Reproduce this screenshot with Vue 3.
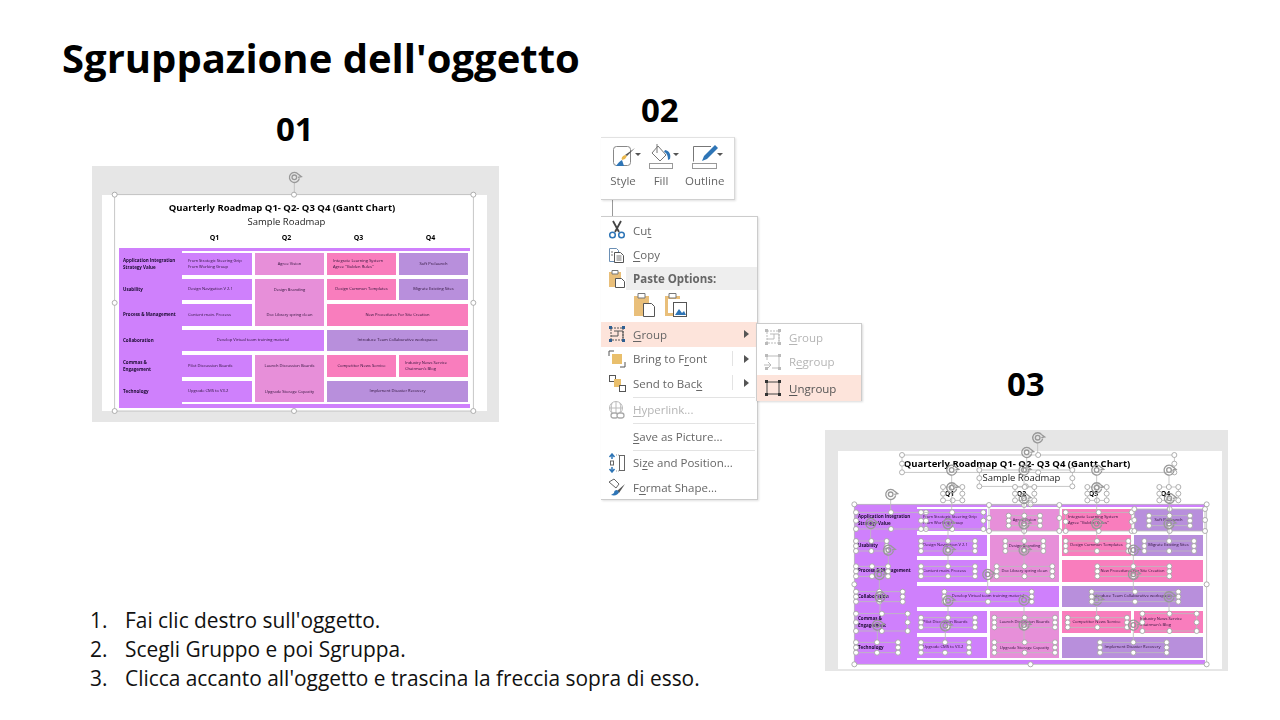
<template>
  <div class="slide">
    <h1 class="title">Sgruppazione dell'oggetto</h1>

    <div class="step step-1">01</div>
    <div class="step step-2">02</div>
    <div class="step step-3">03</div>

    <!-- both screenshots share the same roadmap, only the selection differs -->
    <div v-for="shot in shots" :key="shot.id" class="shot" :class="shot.id">
      <div class="paper">
        <div class="chart-title">Quarterly Roadmap Q1- Q2- Q3 Q4 (Gantt Chart)</div>
        <div class="chart-sub">Sample Roadmap</div>
        <div class="quarters">
          <span v-for="q in quarters" :key="q">{{ q }}</span>
        </div>
        <div class="gantt">
          <div v-for="row in labels" :key="row.text" class="label" :style="{ gridRow: row.row }">
            <span v-for="line in row.text.split('|')" :key="line">{{ line }}</span>
          </div>
          <div v-for="cell in cells" :key="cell.text" class="cell" :class="cell.tone"
            :style="{ gridRow: cell.row, gridColumn: cell.col }">
            <div :class="{ left: cell.left }">
              <span v-for="line in cell.text.split('|')" :key="line">{{ line }}</span>
            </div>
          </div>
        </div>
      </div>
      <svg class="handles" :viewBox="shot.view">
        <g v-for="(b, i) in shot.boxes" :key="i">
          <rect :x="b[0]" :y="b[2]" :width="b[1] - b[0]" :height="b[3] - b[2]" class="sel" />
          <template v-if="b[4]">
            <line :x1="b[4]" :y1="b[5] + 15" :x2="b[4]" :y2="b[2]" class="sel" />
            <path :d="rotator(b[4], b[5])" class="rot" />
            <circle :cx="b[4]" :cy="b[5]" r="7" class="rot" />
          </template>
          <circle v-for="(p, n) in points(b)" :key="n" :cx="p[0]" :cy="p[1]" r="7.5" class="dot" />
        </g>
      </svg>
    </div>

    <div class="connector"></div>

    <div class="ribbon">
      <div v-for="tool in tools" :key="tool.label" class="tool">
        <div class="tool-icon">
          <svg width="28" height="26" viewBox="0 0 28 26" v-html="tool.icon"></svg>
          <i class="caret"></i>
        </div>
        <span>{{ tool.label }}</span>
      </div>
    </div>

    <div class="menu">
      <template v-for="item in menu" :key="item.key">
        <div v-if="item.line" class="sep"></div>
        <div v-else-if="item.paste" class="paste-row">
          <svg width="24" height="24" viewBox="0 0 24 24" v-html="icons.paste"></svg>
          <svg width="24" height="24" viewBox="0 0 24 24" v-html="icons.pastePic"></svg>
        </div>
        <div v-else class="row" :class="{ active: item.active, dim: item.dim, head: item.head }">
          <svg v-if="item.icon" class="row-icon" width="20" height="20" viewBox="0 0 20 20" v-html="icons[item.icon]"></svg>
          <span v-else class="row-icon"></span>
          <span class="row-text">{{ item.a }}<u>{{ item.u }}</u>{{ item.b }}</span>
          <i v-if="item.split" class="split"></i>
          <i v-if="item.more" class="more"></i>
        </div>
      </template>

      <div class="submenu">
        <div v-for="item in submenu" :key="item.a + item.u" class="row" :class="{ active: item.active, dim: item.dim }">
          <svg class="row-icon" width="20" height="20" viewBox="0 0 20 20" v-html="icons[item.icon]"></svg>
          <span class="row-text">{{ item.a }}<u>{{ item.u }}</u>{{ item.b }}</span>
        </div>
      </div>
    </div>

    <ol class="steps">
      <li v-for="(text, i) in instructions" :key="i"><span>{{ i + 1 }}.</span>{{ text }}</li>
    </ol>
  </div>
</template>

<script setup>
const quarters = ['Q1', 'Q2', 'Q3', 'Q4']

const labels = [
  { row: '1', text: 'Application Integration|Strategy Value' },
  { row: '2', text: 'Usability' },
  { row: '3', text: 'Process & Management' },
  { row: '4', text: 'Collaboration' },
  { row: '5', text: 'Commas &|Engagement' },
  { row: '6', text: 'Technology' },
]

const cells = [
  { row: '1', col: '2', tone: 'purple', left: true, text: 'From Strategic Steering Grip|From Working Group' },
  { row: '1', col: '3', tone: 'orchid', text: 'Agree Vision' },
  { row: '1', col: '4', tone: 'pink', left: true, text: 'Integrate Learning System|Agree "Golden Rules"' },
  { row: '1', col: '5', tone: 'lilac', text: 'Soft Prelaunch' },
  { row: '2', col: '2', tone: 'purple', left: true, text: 'Design Navigation V 2.1' },
  { row: '2 / span 2', col: '3', tone: 'orchid spread', text: 'Design Branding|Doc Library spring clean' },
  { row: '2', col: '4', tone: 'pink', text: 'Design Common Templates' },
  { row: '2', col: '5', tone: 'lilac', text: 'Migrate Existing Sites' },
  { row: '3', col: '2', tone: 'purple', left: true, text: 'Content main. Process' },
  { row: '3', col: '4 / span 2', tone: 'pink', text: 'New Procedures For Site Creation' },
  { row: '4', col: '2 / span 2', tone: 'purple', text: 'Develop Virtual team training material' },
  { row: '4', col: '4 / span 2', tone: 'lilac', text: 'Introduce Team Collaborative workspaces' },
  { row: '5', col: '2', tone: 'purple', left: true, text: 'Pilot Discussion Boards' },
  { row: '5 / span 2', col: '3', tone: 'orchid spread', text: 'Launch Discussion Boards|Upgrade Storage Capacity' },
  { row: '5', col: '4', tone: 'pink', text: 'Competitor News Service' },
  { row: '5', col: '5', tone: 'pink', left: true, text: 'Industry News Service|Chairman\'s Blog' },
  { row: '6', col: '2', tone: 'purple', left: true, text: 'Upgrade CMS to V3.2' },
  { row: '6', col: '4 / span 2', tone: 'lilac', text: 'Implement Disaster Recovery' },
]

// selection boxes: x1, x2, y1, y2, rotate handle x, y (3x zoom coordinates)
const shots = [
  { id: 'shot-a', view: '6 18 1221 768', boxes: [[74, 1150, 104, 753, 613, 52]] },
  {
    id: 'shot-b',
    view: '15 15 1209 723',
    boxes: [
      [103, 1160, 238, 718],
      [246, 1063, 90, 142, 653, 38],
      [478, 757, 135, 184, 620, 82],
      [369, 427, 186, 226, 395, 135],
      [585, 643, 186, 226, 612, 135],
      [802, 860, 186, 226, 830, 135],
      [1018, 1075, 186, 226, 1047, 135],
      [108, 318, 262, 312, 212, 208],
      [108, 200, 348, 378, 152, 295],
      [108, 204, 424, 454, 205, 375],
      [108, 248, 500, 530, 178, 448],
      [108, 263, 566, 618, 180, 515],
      [108, 234, 652, 683, 172, 600],
      [303, 490, 262, 312, 395, 188],
      [303, 465, 348, 378, 384, 296],
      [303, 465, 424, 454, 384, 375],
      [373, 635, 500, 530, 503, 448],
      [303, 465, 578, 607, 384, 527],
      [303, 447, 652, 683, 376, 602],
      [507, 718, 240, 318],
      [566, 660, 272, 302, 612, 220],
      [556, 670, 348, 378, 612, 296],
      [530, 697, 424, 454, 612, 375],
      [523, 705, 578, 607, 612, 525],
      [523, 705, 652, 683, 612, 600],
      [737, 935, 262, 318, 830, 188],
      [737, 925, 348, 378, 830, 296],
      [832, 1048, 424, 454, 940, 375],
      [743, 921, 578, 607, 830, 525],
      [840, 1040, 652, 683, 940, 600],
      [943, 1155, 252, 318],
      [987, 1110, 272, 302, 1048, 220],
      [973, 1122, 348, 378, 1047, 296],
      [815, 1075, 500, 530, 940, 448],
      [967, 1130, 566, 618, 1047, 515],
    ],
  },
]

function points(b) {
  const mx = (b[0] + b[1]) / 2
  const my = (b[2] + b[3]) / 2
  return [
    [b[0], b[2]], [mx, b[2]], [b[1], b[2]],
    [b[0], my], [b[1], my],
    [b[0], b[3]], [mx, b[3]], [b[1], b[3]],
  ]
}

function rotator(x, y) {
  return `M${x + 15} ${y + 3}A15 15 0 1 1 ${x + 12} ${y - 9}M${x + 12} ${y - 9}l9 7-10 2`
}

const tools = [
  {
    label: 'Style',
    icon: '<rect x="4.500" y="2.500" width="17" height="19" rx="3" fill="#fff" stroke="#888"/><path d="M26 4l-8 8-2-1z" fill="#555"/><path d="M16 11c-3 1-4 3-3 5l3-1 2-3z" fill="#e8b64c"/><path d="M13 16c-2 1-4 3-6 6h8z" fill="#2e75b6"/>',
  },
  {
    label: 'Fill',
    icon: '<path d="M11 2l8 9-6 6-8-8z" fill="#fff" stroke="#777"/><path d="M10 0v9" stroke="#777"/><path d="M18 6c5 1 6 5 5 9l-2 1c0-4-1-7-4-8z" fill="#2e75b6"/><rect x="2.500" y="19.500" width="23" height="5" fill="#fff" stroke="#999"/>',
  },
  {
    label: 'Outline',
    icon: '<path d="M20 2.500H2.500v15" fill="none" stroke="#777"/><path d="M24 1l3 3-11 11-5 2 2-5z" fill="#2e75b6"/><rect x="1.500" y="19.500" width="24" height="5" fill="#fff" stroke="#999"/>',
  },
]

const groupDots = (fill) => `<g fill="${fill}"><rect x="2" y="2" width="3" height="3"/><rect x="15" y="2" width="3" height="3"/><rect x="2" y="15" width="3" height="3"/><rect x="15" y="15" width="3" height="3"/></g>`

const icons = {
  cut: '<path d="M6 1l6 11M14 1L8 12" stroke="#444" stroke-width="1.800" fill="none"/><circle cx="5.500" cy="15" r="2.800" fill="none" stroke="#2e75b6" stroke-width="1.500"/><circle cx="14.500" cy="15" r="2.800" fill="none" stroke="#2e75b6" stroke-width="1.500"/>',
  copy: '<path d="M2.500 3.500h7l2 2v11h-9z" fill="#fff" stroke="#6b8fb5"/><path d="M7.500 7.500h6l3 3v7h-9z" fill="#fff" stroke="#555"/><path d="M9.500 11h5M9.500 13h5M9.500 15h5M4 7h2M4 10h2" stroke="#777"/>',
  pasteSmall: '<path d="M2 3h12v15H2z" fill="#e9bf7a"/><path d="M5 1.500h6V5H5z" fill="#fff" stroke="#777"/><path d="M8.500 9.500h6l3 3v6h-9z" fill="#fff" stroke="#555"/>',
  paste: '<path d="M1 3h15v20H1z" fill="#e9bf7a"/><path d="M5 .500h7V5H5z" fill="#fff" stroke="#777"/><path d="M10.500 10.500h8l3 3v10h-11z" fill="#fff" stroke="#555"/>',
  pastePic: '<path d="M1 3h15v3H4v14h6v3H1z" fill="#e9bf7a"/><path d="M5 .500h7V5H5z" fill="#fff" stroke="#777"/><rect x="9.500" y="9.500" width="13" height="14" fill="#fff" stroke="#555"/><path d="M11 22l4-6 3 4 2-2 2 4z" fill="#2e75b6"/>',
  group: '<rect x="4" y="4" width="12" height="12" fill="none" stroke="#555" stroke-dasharray="2 1"/><path d="M7 7h9v7M4 12h7V7" fill="none" stroke="#555"/>' + groupDots('#2e5f92'),
  front: '<path d="M2 2h5M2 2v5M18 18h-5M18 18v-5" stroke="#555" fill="none"/><rect x="5" y="5" width="10" height="10" fill="#e9bf6c"/>',
  back: '<rect x="2.500" y="2.500" width="6" height="6" fill="#fff" stroke="#555"/><rect x="7" y="6" width="7" height="8" fill="#e9bf6c"/><rect x="12.500" y="12.500" width="6" height="6" fill="#fff" stroke="#555"/>',
  link: '<circle cx="9" cy="8" r="6.500" fill="none" stroke="#bbb"/><path d="M2.500 8h13M9 1.500v13M5 3c-1 3-1 7 0 10M13 3c1 3 1 7 0 10" stroke="#bbb" fill="none"/><rect x="4" y="13" width="7" height="5" rx="2.500" fill="#fff" stroke="#aaa" stroke-width="1.300"/><rect x="10" y="13" width="7" height="5" rx="2.500" fill="#fff" stroke="#aaa" stroke-width="1.300"/>',
  size: '<path d="M5 1v5M5 19v-5M2.500 4L5 1l2.500 3M2.500 16L5 19l2.500-3" stroke="#2e75b6" stroke-width="1.500" fill="none"/><rect x="3.500" y="8" width="3" height="4" fill="#fff" stroke="#666"/><rect x="12.500" y="2.500" width="5" height="15" fill="#fff" stroke="#666"/><path d="M9 2h3M9 18h3" stroke="#999" stroke-dasharray="1 1"/>',
  format: '<path d="M2 5l5-3 5 5-3 4z" fill="#fff" stroke="#666"/><path d="M18 7l-8 7 2 2z" fill="#555"/><path d="M10 13c-2 0-3 1-3 3l-3 2c4 1 7 0 8-3z" fill="#2e75b6"/>',
  subGroup: '<g opacity=".4"><rect x="4" y="4" width="12" height="12" fill="none" stroke="#555" stroke-dasharray="2 1"/><path d="M7 7h9v7M4 12h7V7" fill="none" stroke="#555"/>' + groupDots('#555') + '</g>',
  regroup: '<g opacity=".4"><path d="M4 8V4h12v12H9" fill="none" stroke="#555"/><path d="M1 13h6M5 10l3 3-3 3" fill="none" stroke="#555"/>' + groupDots('#555') + '</g>',
  ungroup: '<rect x="4" y="4" width="12" height="12" fill="none" stroke="#444"/>' + groupDots('#333'),
}

const menu = [
  { key: 'cut', icon: 'cut', a: 'Cu', u: 't', b: '' },
  { key: 'copy', icon: 'copy', a: '', u: 'C', b: 'opy' },
  { key: 'head', icon: 'pasteSmall', a: 'Paste Options:', u: '', b: '', head: true },
  { key: 'paste', paste: true },
  { key: 'group', icon: 'group', a: '', u: 'G', b: 'roup', active: true, more: true },
  { key: 'front', icon: 'front', a: 'Bring to F', u: 'r', b: 'ont', more: true, split: true },
  { key: 'back', icon: 'back', a: 'Send to Bac', u: 'k', b: '', more: true, split: true },
  { key: 's1', line: true },
  { key: 'link', icon: 'link', a: '', u: 'H', b: 'yperlink...', dim: true },
  { key: 's2', line: true },
  { key: 'save', a: '', u: 'S', b: 'ave as Picture...' },
  { key: 's3', line: true },
  { key: 'size', icon: 'size', a: 'Si', u: 'z', b: 'e and Position...' },
  { key: 'format', icon: 'format', a: 'F', u: 'o', b: 'rmat Shape...' },
]

const submenu = [
  { icon: 'subGroup', a: '', u: 'G', b: 'roup', dim: true },
  { icon: 'regroup', a: 'R', u: 'e', b: 'group', dim: true },
  { icon: 'ungroup', a: '', u: 'U', b: 'ngroup', active: true },
]

const instructions = [
  "Fai clic destro sull'oggetto.",
  'Scegli Gruppo e poi Sgruppa.',
  "Clicca accanto all'oggetto e trascina la freccia sopra di esso.",
]
</script>

<style>
html, body {
  margin: 0;
  background: #fff;
}
</style>

<style scoped>
.slide {
  position: relative;
  width: 1280px;
  height: 720px;
  overflow: hidden;
  background: #fff;
  color: #000;
  font-family: "Open Sans", "Liberation Sans", sans-serif;
}
.title {
  position: absolute;
  left: 62px;
  top: 31px;
  margin: 0;
  font-size: 40px;
  line-height: 54px;
  font-weight: 700;
  white-space: nowrap;
}
.step {
  position: absolute;
  font-size: 33px;
  line-height: 40px;
  font-weight: 700;
}
.step-1 { left: 276px; top: 109px; }
.step-2 { left: 641px; top: 90px; }
.step-3 { left: 1007px; top: 364px; }

/* pasted screenshots */
.shot {
  position: absolute;
  background: #e6e6e6;
  filter: blur(0.3px);
}
.shot-a {
  left: 92px;
  top: 166px;
  width: 407px;
  height: 256px;
  padding: 29px 12px 11px 10px;
  box-sizing: border-box;
}
.shot-b {
  left: 825px;
  top: 430px;
  width: 403px;
  height: 241px;
  padding: 21px 6px 2px 13px;
  box-sizing: border-box;
}
.paper {
  height: 100%;
  padding-left: 17px;
  background: #fff;
  box-sizing: border-box;
}
.shot-b .paper { padding-left: 16px; }
.chart-title {
  width: 326px;
  padding-top: 5px;
  font-size: 9.500px;
  line-height: 15px;
  font-weight: 700;
  text-align: center;
  white-space: nowrap;
}
.chart-sub {
  width: 335px;
  font-size: 9.500px;
  line-height: 14px;
  text-align: center;
  color: #222;
}
.quarters {
  display: grid;
  grid-template-columns: repeat(4, 69px);
  column-gap: 3px;
  height: 14px;
  margin-left: 61px;
  padding-top: 2px;
  box-sizing: border-box;
  font-size: 7px;
  line-height: 14px;
  font-weight: 700;
  text-align: center;
}
.gantt {
  position: relative;
  display: grid;
  grid-template-columns: 60px 70px 69px 69px 69px;
  grid-template-rows: repeat(6, 21.500px);
  gap: 4px 3px;
  width: 351px;
  height: 160px;
  margin-top: 5px;
  padding: 5px 1px 0 0;
  box-sizing: border-box;
  background: #cf80fc;
  font-size: 4.100px;
  line-height: 6px;
}
.gantt::before {
  content: "";
  position: absolute;
  left: 63px;
  right: 0;
  top: 3px;
  bottom: 4px;
  background: #fff;
}
.label {
  position: relative;
  grid-column: 1;
  display: flex;
  flex-direction: column;
  justify-content: center;
  padding-left: 4px;
  font-size: 4.500px;
  line-height: 7px;
  font-weight: 700;
  white-space: nowrap;
  color: #1a0a30;
}
.label span, .cell span { display: block; }
.cell {
  position: relative;
  display: flex;
  align-items: center;
  justify-content: center;
  text-align: center;
  color: #2c1238;
  white-space: nowrap;
}
.cell .left {
  width: 100%;
  padding-left: 6px;
  box-sizing: border-box;
  text-align: left;
}
.cell.spread > div {
  display: flex;
  flex-direction: column;
  justify-content: space-between;
  height: 100%;
}
.cell.spread span { line-height: 21.500px; }
.purple { background: #cf80fc; }
.orchid { background: #e78fd9; }
.pink { background: #f97dbd; }
.lilac { background: #b88fdc; }
.handles {
  position: absolute;
  left: 0;
  top: 0;
  width: 100%;
  height: 100%;
}
.sel {
  fill: none;
  stroke: #bcbcbc;
  stroke-width: 2.500;
}
.dot {
  fill: #fff;
  stroke: #a0a0a0;
  stroke-width: 2.500;
}
.rot {
  fill: none;
  stroke: #999;
  stroke-width: 4;
}

/* context menu */
.connector {
  position: absolute;
  left: 612px;
  top: 200px;
  width: 1px;
  height: 16px;
  background: #999;
}
.ribbon {
  position: absolute;
  left: 601px;
  top: 137px;
  display: flex;
  gap: 10px;
  width: 134px;
  height: 63px;
  padding: 6px 0 0 8px;
  box-sizing: border-box;
  background: #fff;
  border-right: 1px solid #d8d8d8;
  border-top: 1px solid #e2e2e2;
  border-bottom: 1px solid #d0d0d0;
  box-shadow: 1px 1px 2px rgba(0, 0, 0, 0.12);
  font-size: 11.500px;
  color: #666;
  filter: blur(0.25px);
}
.tool {
  display: flex;
  flex-direction: column;
  align-items: center;
  gap: 3px;
}
.tool-icon {
  position: relative;
  display: flex;
}
.caret {
  position: absolute;
  right: -4px;
  top: 9px;
  border: 3px solid transparent;
  border-top: 3px solid #555;
}
.menu {
  position: absolute;
  left: 601px;
  top: 216px;
  width: 157px;
  height: 284px;
  padding-top: 1px;
  box-sizing: border-box;
  background: #fff;
  border-top: 1px solid #ccc;
  border-right: 1px solid #ccc;
  border-bottom: 1px solid #ccc;
  box-shadow: 1px 1px 2px rgba(0, 0, 0, 0.12);
  font-size: 11.500px;
  color: #666;
  filter: blur(0.25px);
}
.row {
  position: relative;
  display: flex;
  align-items: center;
  height: 24.500px;
  white-space: nowrap;
}
.row-icon {
  flex: none;
  width: 20px;
  margin: 0 6px;
}
.row u {
  text-decoration-thickness: 1px;
  text-underline-offset: 2px;
}
.row.head {
  height: 23px;
  font-weight: 700;
  color: #666;
  background: linear-gradient(to right, #fff 25px, #eee 25px);
}
.row.active { background: #fde4db; }
.row.dim { color: #b5b5b5; }
.sep {
  height: 1px;
  margin: 1px 2px 0 32px;
  background: #e3e3e3;
}
.paste-row {
  display: flex;
  gap: 7px;
  height: 32px;
  padding: 3px 0 0 32px;
  box-sizing: border-box;
}
.more {
  position: absolute;
  right: 8px;
  top: 8px;
  border: 4px solid transparent;
  border-left: 5px solid #555;
  border-right: 0;
}
.split {
  position: absolute;
  right: 24px;
  top: 4px;
  width: 1px;
  height: 15px;
  background: #e3e3e3;
}
.submenu {
  position: absolute;
  left: 155px;
  top: 106px;
  width: 106px;
  height: 78px;
  padding-top: 1px;
  box-sizing: border-box;
  background: #fff;
  border: 1px solid #ccc;
  box-shadow: 1px 1px 2px rgba(0, 0, 0, 0.15);
}
.submenu .row.active {
  height: 26px;
  margin-top: 1px;
  color: #555;
}

.steps {
  position: absolute;
  left: 90px;
  top: 606px;
  margin: 0;
  padding: 0;
  list-style: none;
  font-size: 20.900px;
  line-height: 29px;
  color: #111;
}
.steps li {
  display: flex;
  white-space: nowrap;
}
.steps span {
  width: 35px;
}
</style>
